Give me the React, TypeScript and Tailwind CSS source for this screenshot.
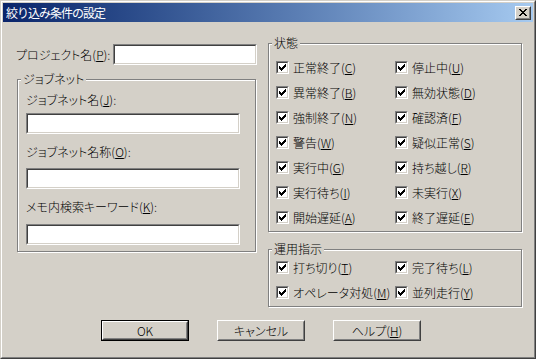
import type { ReactNode } from 'react';

const CHECK_PX = [
  [6, 0], [5, 1], [6, 1], [0, 2], [4, 2], [5, 2], [6, 2],
  [0, 3], [1, 3], [3, 3], [4, 3], [5, 3],
  [0, 4], [1, 4], [2, 4], [3, 4], [4, 4],
  [1, 5], [2, 5], [3, 5], [2, 6],
];

const CLOSE_PX = [
  [0, 0], [1, 0], [6, 0], [7, 0],
  [1, 1], [2, 1], [5, 1], [6, 1],
  [2, 2], [3, 2], [4, 2], [5, 2],
  [3, 3], [4, 3],
  [2, 4], [3, 4], [4, 4], [5, 4],
  [1, 5], [2, 5], [5, 5], [6, 5],
  [0, 6], [1, 6], [6, 6], [7, 6],
];

function Pixels({ px, w, h }: { px: number[][]; w: number; h: number }) {
  return (
    <svg width={w} height={h} viewBox={`0 0 ${w} ${h}`} shapeRendering="crispEdges">
      {px.map(([x, y]) => (
        <rect key={`${x}-${y}`} x={x} y={y} width="1" height="1" fill="#000" />
      ))}
    </svg>
  );
}

// Label with mnemonic key in parens, e.g. 正常終了(C)
function Mn({ text, k, colon }: { text: string; k: string; colon?: boolean }) {
  return (
    <span className="whitespace-nowrap">
      {text}(<u className="underline-offset-[1px]">{k}</u>){colon ? ':' : ''}
    </span>
  );
}

function Edit({ className }: { className: string }) {
  return (
    <div className={`h-[21px] border border-t-[#808080] border-l-[#808080] border-r-white border-b-white ${className}`}>
      <div className="h-full border border-t-[#404040] border-l-[#404040] border-r-[#d4d0c8] border-b-[#d4d0c8] bg-white" />
    </div>
  );
}

function Group({ title, className, children }: { title: string; className: string; children: ReactNode }) {
  return (
    <div className={`relative border border-[#808080] shadow-[1px_1px_0_#fff,inset_1px_1px_0_#fff] ${className}`}>
      <span className="absolute -top-[8px] left-[3px] bg-[#d4d0c8] px-[2px] leading-[14px]">{title}</span>
      {children}
    </div>
  );
}

function Check({ text, k }: { text: string; k: string }) {
  return (
    <div className="flex h-[25px] items-center gap-[4px]">
      <span className="flex h-[13px] w-[13px] shrink-0 border border-t-[#808080] border-l-[#808080] border-r-white border-b-white">
        <span className="flex flex-1 items-center justify-center border border-t-[#404040] border-l-[#404040] border-r-[#d4d0c8] border-b-[#d4d0c8] bg-white">
          <Pixels px={CHECK_PX} w={7} h={7} />
        </span>
      </span>
      <span className="leading-[14px]"><Mn text={text} k={k} /></span>
    </div>
  );
}

function Btn({ children, isDefault }: { children: ReactNode; isDefault?: boolean }) {
  return (
    <div className={`h-[21px] w-[88px] ${isDefault ? 'border border-black' : ''}`}>
      <div className="h-full border border-t-white border-l-white border-r-[#404040] border-b-[#404040]">
        <div className="flex h-full items-center justify-center border border-t-[#d4d0c8] border-l-[#d4d0c8] border-r-[#808080] border-b-[#808080] leading-[14px]">
          {children}
        </div>
      </div>
    </div>
  );
}

const STATUS: [string, string][][] = [
  [['正常終了', 'C'], ['停止中', 'U']],
  [['異常終了', 'B'], ['無効状態', 'D']],
  [['強制終了', 'N'], ['確認済', 'F']],
  [['警告', 'W'], ['疑似正常', 'S']],
  [['実行中', 'G'], ['持ち越し', 'R']],
  [['実行待ち', 'I'], ['未実行', 'X']],
  [['開始遅延', 'A'], ['終了遅延', 'E']],
];

const OPS: [string, string][][] = [
  [['打ち切り', 'T'], ['完了待ち', 'L']],
  [['オペレータ対処', 'M'], ['並列走行', 'Y']],
];

export default function App() {
  return (
    <div className="h-[359px] w-[536px] bg-[#d4d0c8] text-[12px] font-light text-black font-['Noto_Sans_CJK_JP','Noto_Sans_CJK_SC',sans-serif] [font-feature-settings:'palt']">
      <div className="h-full border border-t-[#d4d0c8] border-l-[#d4d0c8] border-r-[#404040] border-b-[#404040]">
        <div className="flex h-full flex-col border border-t-white border-l-white border-r-[#808080] border-b-[#808080] p-[1px]">

          {/* Title bar */}
          <div className="flex h-[19px] shrink-0 items-center justify-between bg-linear-to-r from-[#0a246a] to-[#a6caf0] px-[2px]">
            <span className="pl-[1px] text-[12px] font-normal leading-none tracking-[-1px] text-white [font-feature-settings:normal]">絞り込み条件の設定</span>
            <div className="h-[14px] w-[16px] border border-t-white border-l-white border-r-[#404040] border-b-[#404040]">
              <div className="flex h-full items-center justify-center border border-t-[#d4d0c8] border-l-[#d4d0c8] border-r-[#808080] border-b-[#808080] bg-[#d4d0c8]">
                <Pixels px={CLOSE_PX} w={8} h={7} />
              </div>
            </div>
          </div>

          <div className="flex">
            {/* Left column */}
            <div className="ml-[13px] mt-[22px] w-[241px]">
              <div className="flex h-[21px] items-center justify-between">
                <span className="leading-[14px]"><Mn text="プロジェクト名" k="P" colon /></span>
                <Edit className="w-[144px]" />
              </div>

              <Group title="ジョブネット" className="ml-[1px] mt-[14px] h-[173px] w-[239px]">
                <div className="flex flex-col pl-[8px] pt-[13px]">
                  <span className="leading-[14px]"><Mn text="ジョブネット名" k="J" colon /></span>
                  <Edit className="mt-[6px] w-[214px]" />
                  <span className="mt-[11px] leading-[14px]"><Mn text="ジョブネット名称" k="O" colon /></span>
                  <Edit className="mt-[9px] w-[214px]" />
                  <span className="mt-[11px] leading-[14px]"><Mn text="メモ内検索キーワード" k="K" colon /></span>
                  <Edit className="mt-[10px] w-[214px]" />
                </div>
              </Group>
            </div>

            {/* Right column */}
            <div className="ml-[11px] mt-[21px] w-[254px]">
              <Group title="状態" className="h-[189px]">
                <div className="grid grid-cols-[119px_1fr] pl-[7px] pt-[11px]">
                  {STATUS.flat().map(([t, k]) => (
                    <Check key={t} text={t} k={k} />
                  ))}
                </div>
              </Group>

              <Group title="運用指示" className="mt-[17px] h-[58px]">
                <div className="grid grid-cols-[119px_1fr] pl-[7px] pt-[5px]">
                  {OPS.flat().map(([t, k]) => (
                    <Check key={t} text={t} k={k} />
                  ))}
                </div>
              </Group>
            </div>
          </div>

          {/* Buttons */}
          <div className="ml-[98px] mt-[13px] flex gap-[28px]">
            <Btn isDefault>OK</Btn>
            <Btn>キャンセル</Btn>
            <Btn><Mn text="ヘルプ" k="H" /></Btn>
          </div>
        </div>
      </div>
    </div>
  );
}
